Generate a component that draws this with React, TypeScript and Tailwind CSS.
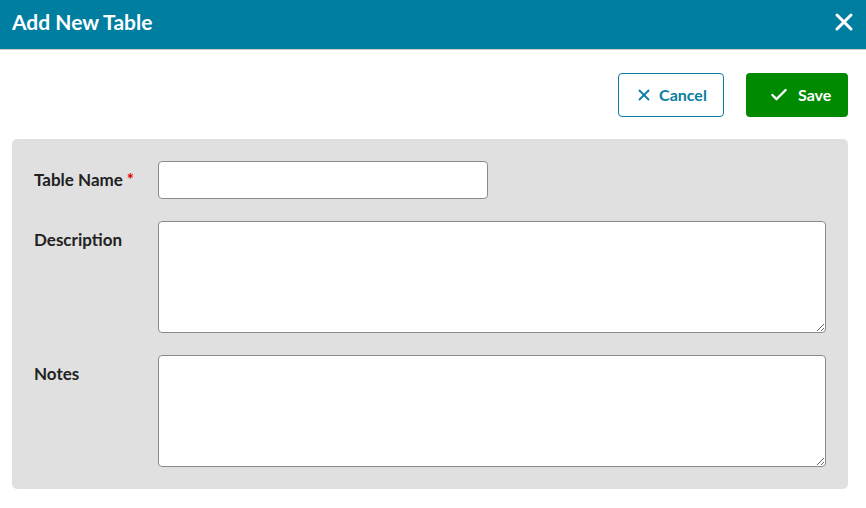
import { X, Check } from "lucide-react";

const font = { fontFamily: "Lato, 'Noto Sans', sans-serif" };

function Field({ label, required, children, top }: { label: string; required?: boolean; children: React.ReactNode; top?: boolean }) {
  return (
    <div className={`flex ${top ? "items-start" : "items-center"}`}>
      <label className={`w-[124px] shrink-0 text-[17px] font-bold text-[#222] ${top ? "pt-[6px]" : ""}`}>
        {label}
        {required && <span className="ml-[4px] text-[#e00000]">*</span>}
      </label>
      {children}
    </div>
  );
}

export default function App() {
  return (
    <div className="w-[866px] h-[508px] bg-white" style={font}>
      {/* Header */}
      <div className="h-[50px] bg-[#007ea0] border-b border-[#c8c8c8] flex items-center justify-between pl-[12px] pr-[8px] pb-[5px]">
        <h1 className="text-[21px] font-bold text-white">Add New Table</h1>
        <X className="w-[28px] h-[28px] text-white" strokeWidth={2.6} />
      </div>

      {/* Actions */}
      <div className="flex justify-end gap-[22px] pt-[23px] pr-[18px]">
        <button className="w-[106px] h-[44px] flex items-center justify-center gap-[6px] rounded-[4px] border border-[#0a7ea0] bg-white text-[#0a7ea0] text-[16px] font-bold">
          <X className="w-[18px] h-[18px]" strokeWidth={2.4} />
          Cancel
        </button>
        <button className="w-[102px] h-[44px] flex items-center gap-[9px] pl-[23px] rounded-[4px] bg-[#008a00] text-white text-[16px] font-bold">
          <Check className="w-[20px] h-[20px]" strokeWidth={2.8} />
          Save
        </button>
      </div>

      {/* Form */}
      <div className="ml-[12px] mr-[18px] mt-[22px] h-[350px] rounded-[5px] bg-[#e0e0e0] pl-[22px] pr-[22px] pt-[22px] flex flex-col gap-[22px]">
        <Field label="Table Name" required>
          <input className="w-[330px] h-[38px] rounded-[4px] border border-[#8a8a8a] bg-white px-2 outline-none" />
        </Field>
        <Field label="Description" top>
          <textarea className="flex-1 h-[112px] rounded-[4px] border border-[#8a8a8a] bg-white px-2 outline-none" />
        </Field>
        <Field label="Notes" top>
          <textarea className="flex-1 h-[112px] rounded-[4px] border border-[#8a8a8a] bg-white px-2 outline-none" />
        </Field>
      </div>
    </div>
  );
}
